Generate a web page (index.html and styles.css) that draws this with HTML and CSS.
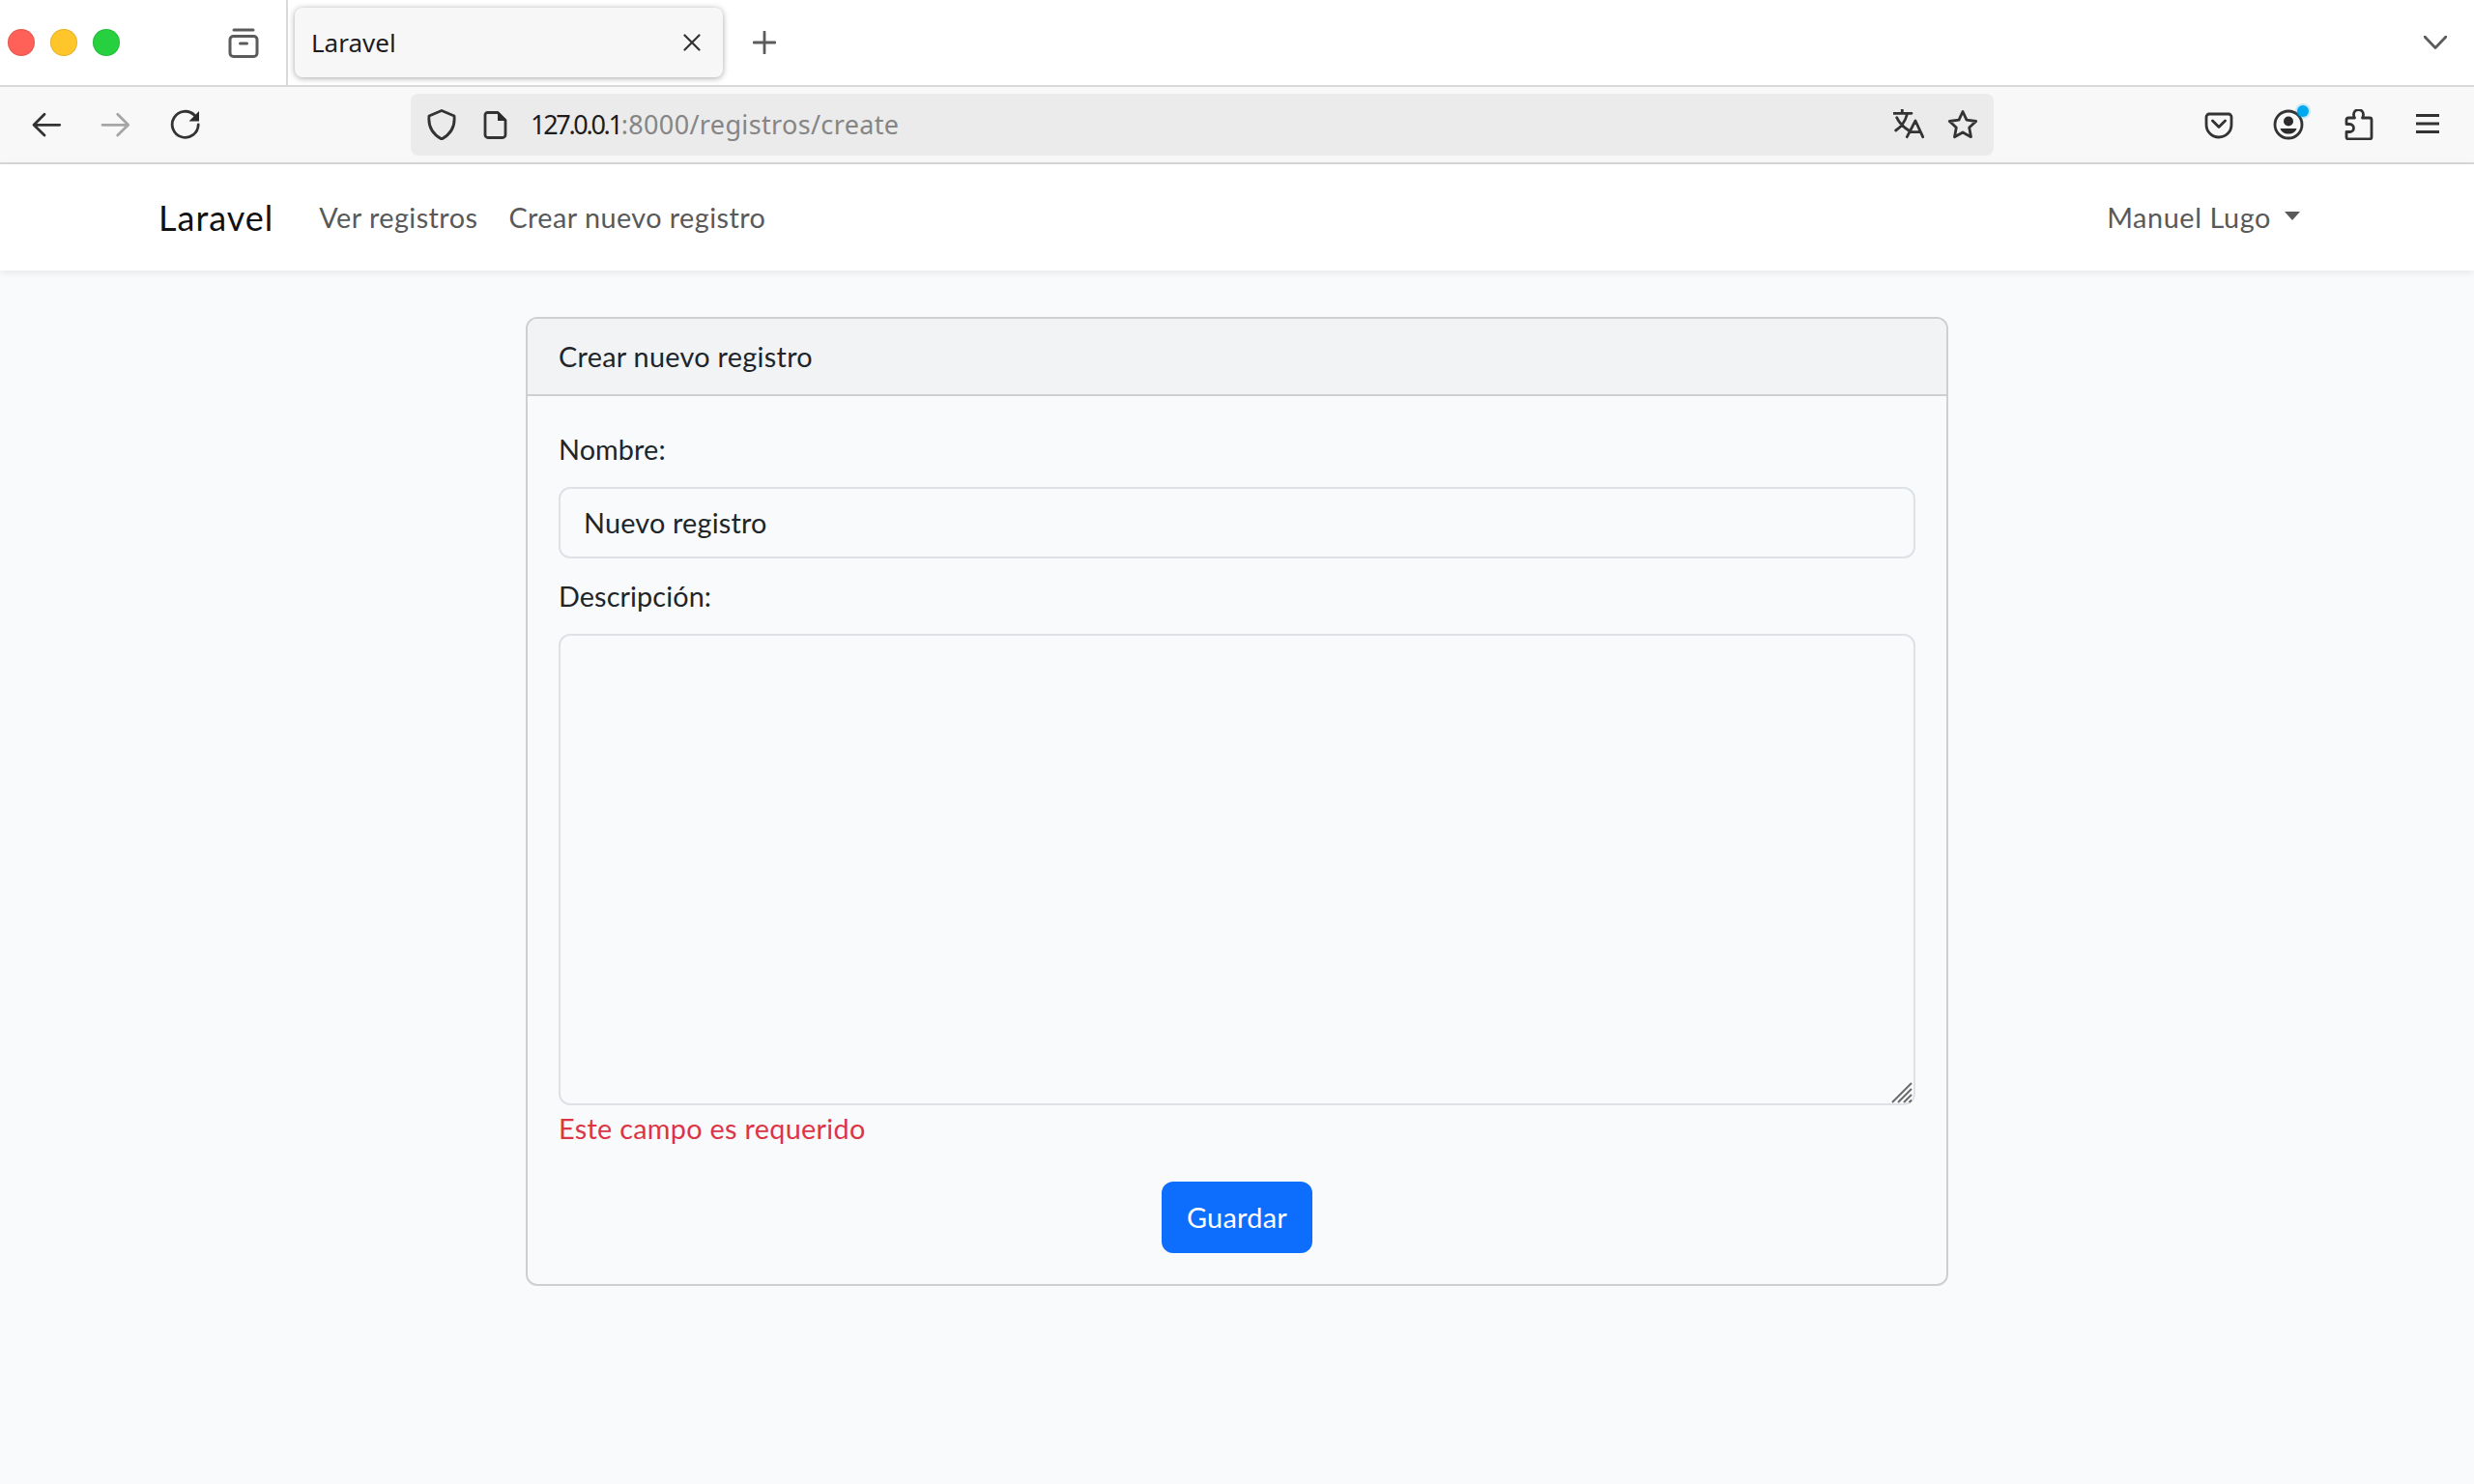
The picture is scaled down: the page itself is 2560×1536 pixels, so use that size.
FILE: index.html
```html
<!DOCTYPE html>
<html lang="es">
<head>
  <meta charset="UTF-8">
  <meta name="viewport" content="width=device-width, initial-scale=1.0">
  <title>Laravel</title>
  <link rel="stylesheet" href="styles.css">
</head>
<body>

  <!-- Browser tab strip -->
  <div class="tab-strip">
    <div class="lights">
      <span class="light light-red"></span>
      <span class="light light-yellow"></span>
      <span class="light light-green"></span>
    </div>
    <svg class="icon view-icon" viewBox="0 0 32 32">
      <path d="M6 3h20M5.500 9.500h21a3.500 3.500 0 0 1 3.500 3.500v14a3.500 3.500 0 0 1-3.500 3.500h-21a3.500 3.500 0 0 1-3.500-3.500V13a3.500 3.500 0 0 1 3.500-3.500zM12.500 17h7"/>
    </svg>
    <div class="tab-sep"></div>
    <div class="tab">
      <span class="tab-title">Laravel</span>
      <svg class="icon tab-close" viewBox="0 0 18 18"><path d="M1.500 1.500l15 15M16.500 1.500l-15 15"/></svg>
    </div>
    <svg class="icon new-tab" viewBox="0 0 24 24"><path d="M12 1v22M1 12h22"/></svg>
    <svg class="icon tab-list" viewBox="0 0 24 14"><path d="M1 1l11 11.500L23 1"/></svg>
  </div>

  <!-- Browser toolbar -->
  <div class="toolbar">
    <svg class="icon tool" viewBox="0 0 32 32"><path d="M29.700 16.300H4M14 5.300L3 16.300l11 10.700"/></svg>
    <svg class="icon tool tool-off" viewBox="0 0 32 32"><path d="M2 16.300h26M17.700 5.300l11 11-11 10.700"/></svg>
    <svg class="icon tool" viewBox="0 0 32 32">
      <path d="M25.500 6.500A13.500 13.500 0 1 0 29.200 16"/>
      <path class="solid" d="M30 2v10.500H19.500z"/>
    </svg>

    <div class="urlbar">
      <svg class="icon url-icon" viewBox="0 0 32 32"><path d="M16 1.500L29 7c1 10-2 18-13 24C5 25 2 17 3 7z"/></svg>
      <svg class="icon url-icon" viewBox="0 0 32 32">
        <path d="M7.500 3.500H18l8 8v15a3 3 0 0 1-3 3H8a3 3 0 0 1-3-3V6a2.500 2.500 0 0 1 2.500-2.500z"/>
        <path class="solid" d="M18 3h1l8 8v1h-9z"/>
      </svg>
      <div class="url-text"><span class="url-host">127.0.0.1</span>:8000/registros/create</div>
      <svg class="icon url-icon" viewBox="0 0 32 32">
        <path d="M.500 4.300H19M9.300.500v3.800M14.300 5.500C12.500 12.500 8.500 18 2.700 22M3.700 8.700c2.500 5.500 7 10 12.300 13.300M14.300 28.700L23 12l7.700 16.700M17.700 23.700h10"/>
      </svg>
      <svg class="icon url-icon" viewBox="0 0 32 32"><path d="M16 2.500l4 8.700 9.700 1.300-7 6.600 1.800 9.600L16 24l-8.500 4.700 1.800-9.600-7-6.600 9.700-1.300z"/></svg>
    </div>

    <svg class="icon tool" viewBox="0 0 32 32"><path d="M6 5h20a3 3 0 0 1 3 3v8c0 7.500-6 13-13 13S3 23.500 3 16V8a3 3 0 0 1 3-3zM9.500 12l6.500 6.500 6.500-6.500"/></svg>
    <div class="account">
      <svg class="icon tool" viewBox="0 0 32 32">
        <circle cx="16" cy="16" r="14"/>
        <circle class="solid" cx="16" cy="12.500" r="5"/>
        <path class="solid" d="M7.500 20h17c-1 3.500-4 5.500-8.500 5.500s-7.500-2-8.500-5.500z"/>
      </svg>
      <span class="account-dot"></span>
    </div>
    <svg class="icon tool" viewBox="0 0 32 32">
      <path d="M12.500 9c-1-1.500-1-2-1-3.500a5 5 0 0 1 10 0c0 1.500 0 2-1 3.500H28a2 2 0 0 1 2 2v18a2 2 0 0 1-2 2H6a2 2 0 0 1-2-2v-5.500h3.500a4 4 0 0 0 0-8H4V11a2 2 0 0 1 2-2z"/>
    </svg>
    <svg class="icon tool menu-icon" viewBox="0 0 32 32"><path d="M4 6.500h24M4 15h24M4 23.500h24"/></svg>
  </div>

  <!-- App navbar -->
  <nav class="navbar">
    <a class="brand" href="#">Laravel</a>
    <a class="nav-link" href="#">Ver registros</a>
    <a class="nav-link" href="#">Crear nuevo registro</a>
    <a class="nav-link user-link" href="#">Manuel Lugo<span class="caret"></span></a>
  </nav>

  <!-- Form card -->
  <main class="content">
    <div class="card">
      <div class="card-header">Crear nuevo registro</div>
      <form class="card-body">
        <label class="field-label" for="nombre">Nombre:</label>
        <input class="form-control field-input" id="nombre" type="text" value="Nuevo registro">

        <label class="field-label" for="descripcion">Descripción:</label>
        <div class="textarea-wrap">
          <textarea class="form-control field-area" id="descripcion"></textarea>
          <svg class="resizer" viewBox="0 0 22 22">
            <path d="M1 21L21 1M7 21L21 7M13 21l8-8M18.500 21l2.500-2.500"/>
          </svg>
        </div>
        <div class="field-error">Este campo es requerido</div>

        <div class="form-actions">
          <button class="btn-primary" type="button">Guardar</button>
        </div>
      </form>
    </div>
  </main>

</body>
</html>
```

FILE: styles.css
```css
/* Overall Styling */
body {
  font-family: 'Lato', sans-serif;
  font-size: 28.8px;
  line-height: 46px;
  letter-spacing: 0.3px;
  color: #212529;
  background-color: #f8fafc;
  margin: 0;
  padding: 0;
}

a {
  text-decoration: none;
}

/* Shared browser icon styles */
.icon {
  display: block;
  flex: none;
  fill: none;
  stroke: #333335;
  stroke-width: 2.8;
  stroke-linecap: round;
  stroke-linejoin: round;
}

.icon .solid {
  fill: #2b2b2d;
  stroke: none;
}

/* Tab strip */
.tab-strip {
  display: flex;
  align-items: center;
  height: 88px;
  padding-left: 8px;
  background-color: #fff;
  border-bottom: 2px solid #d9d9d9;
  font-family: 'Noto Sans', sans-serif;
  letter-spacing: 0;
}

.lights {
  display: flex;
  gap: 16px;
}

.light {
  width: 28px;
  height: 28px;
  border-radius: 50%;
  box-sizing: border-box;
  border: 1px solid rgba(0, 0, 0, 0.1);
}

.light-red { background-color: #ff6058; }
.light-yellow { background-color: #ffc62c; }
.light-green { background-color: #27d03f; }

.view-icon {
  width: 32px;
  height: 32px;
  margin-left: 112px;
  stroke: #5b5b5d;
  stroke-width: 3;
}

.tab-sep {
  width: 2px;
  height: 88px;
  margin-left: 28px;
  background-color: #d9d9d9;
}

.tab {
  display: flex;
  align-items: center;
  justify-content: space-between;
  width: 443px;
  height: 72px;
  margin-left: 7px;
  padding: 0 23px 0 17px;
  box-sizing: border-box;
  background-color: #f7f7f7;
  border-radius: 8px;
  box-shadow: 0 1px 6px rgba(0, 0, 0, 0.35);
}

.tab-title {
  font-size: 26px;
  color: #1c1c1e;
}

.tab-close {
  width: 18px;
  height: 18px;
  stroke-width: 2.2;
}

.new-tab {
  width: 24px;
  height: 24px;
  margin-left: 31px;
  stroke: #5b5b5d;
}

.tab-list {
  width: 24px;
  height: 14px;
  margin-left: auto;
  margin-right: 28px;
  stroke: #5b5b5d;
}

/* Toolbar */
.toolbar {
  display: flex;
  align-items: center;
  gap: 40px;
  height: 78px;
  padding: 0 32px;
  background-color: #f8f8f8;
  border-bottom: 2px solid #d9d9d9;
  font-family: 'Noto Sans', sans-serif;
  letter-spacing: 0;
}

.tool {
  width: 32px;
  height: 32px;
}

.tool-off {
  stroke: #a6a6a6;
}

.urlbar {
  flex: 1;
  display: flex;
  align-items: center;
  height: 64px;
  margin: 0 177px;
  padding: 0 16px;
  background-color: #ebebeb;
  border-radius: 8px;
}

.url-icon {
  width: 32px;
  height: 32px;
  margin-right: 24px;
}

.url-icon:last-child {
  margin-right: 0;
}

.url-text {
  flex: 1;
  margin-left: -4px;
  font-size: 27px;
  letter-spacing: 0.35px;
  color: #858585;
}

.url-host {
  letter-spacing: -2.3px;
  color: #1c1c1e;
}

.menu-icon {
  stroke-linecap: butt;
}

.account {
  position: relative;
}

.account-dot {
  position: absolute;
  top: -4px;
  right: -5px;
  width: 12px;
  height: 12px;
  border-radius: 50%;
  background-color: #00a8f0;
  box-shadow: 0 0 0 2px rgba(0, 168, 240, 0.2);
}

/* Navbar */
.navbar {
  position: relative;
  display: flex;
  align-items: center;
  height: 110px;
  padding: 0 180px 0 164px;
  background-color: #fff;
  box-shadow: 0 2px 8px rgba(0, 0, 0, 0.08);
}

.brand {
  margin-right: 47px;
  font-size: 36px;
  letter-spacing: 1px;
  color: #111;
}

.nav-link {
  margin-right: 32px;
  letter-spacing: 0.45px;
  color: #595959;
}

.user-link {
  display: flex;
  align-items: center;
  margin-left: auto;
  margin-right: 0;
  letter-spacing: 0.6px;
}

.caret {
  width: 0;
  height: 0;
  margin-left: 14px;
  margin-bottom: 4px;
  border-top: 9px solid #595959;
  border-left: 8px solid transparent;
  border-right: 8px solid transparent;
}

/* Card */
.content {
  padding-top: 48px;
}

.card {
  width: 1472px;
  margin: 0 auto;
  box-sizing: border-box;
  border: 2px solid #cdcfd1;
  border-radius: 12px;
  overflow: hidden;
}

.card-header {
  padding: 16px 32px;
  background-color: #f1f3f5;
  border-bottom: 2px solid #cdcfd1;
}

.card-body {
  display: block;
  padding: 32px;
}

.field-label {
  display: block;
  margin-bottom: 16px;
  letter-spacing: 0.1px;
}

.form-control {
  display: block;
  width: 100%;
  box-sizing: border-box;
  padding: 12px 24px;
  font: inherit;
  letter-spacing: 0.2px;
  color: #212529;
  background-color: #f8fafc;
  border: 2px solid #dee2e6;
  border-radius: 12px;
  outline: none;
}

.field-input {
  height: 74px;
  margin-bottom: 16px;
}

.textarea-wrap {
  position: relative;
}

.field-area {
  height: 488px;
  resize: none;
}

.resizer {
  position: absolute;
  right: 3px;
  bottom: 2px;
  width: 22px;
  height: 22px;
  fill: none;
  stroke: #6a6a6a;
  stroke-width: 2;
}

.field-error {
  margin-top: 1px;
  color: #dc3545;
}

.form-actions {
  display: flex;
  justify-content: center;
  margin-top: 32px;
}

.btn-primary {
  width: 156px;
  height: 74px;
  padding: 0;
  font: inherit;
  letter-spacing: inherit;
  color: #fff;
  background-color: #0d6efd;
  border: none;
  border-radius: 12px;
}
```
